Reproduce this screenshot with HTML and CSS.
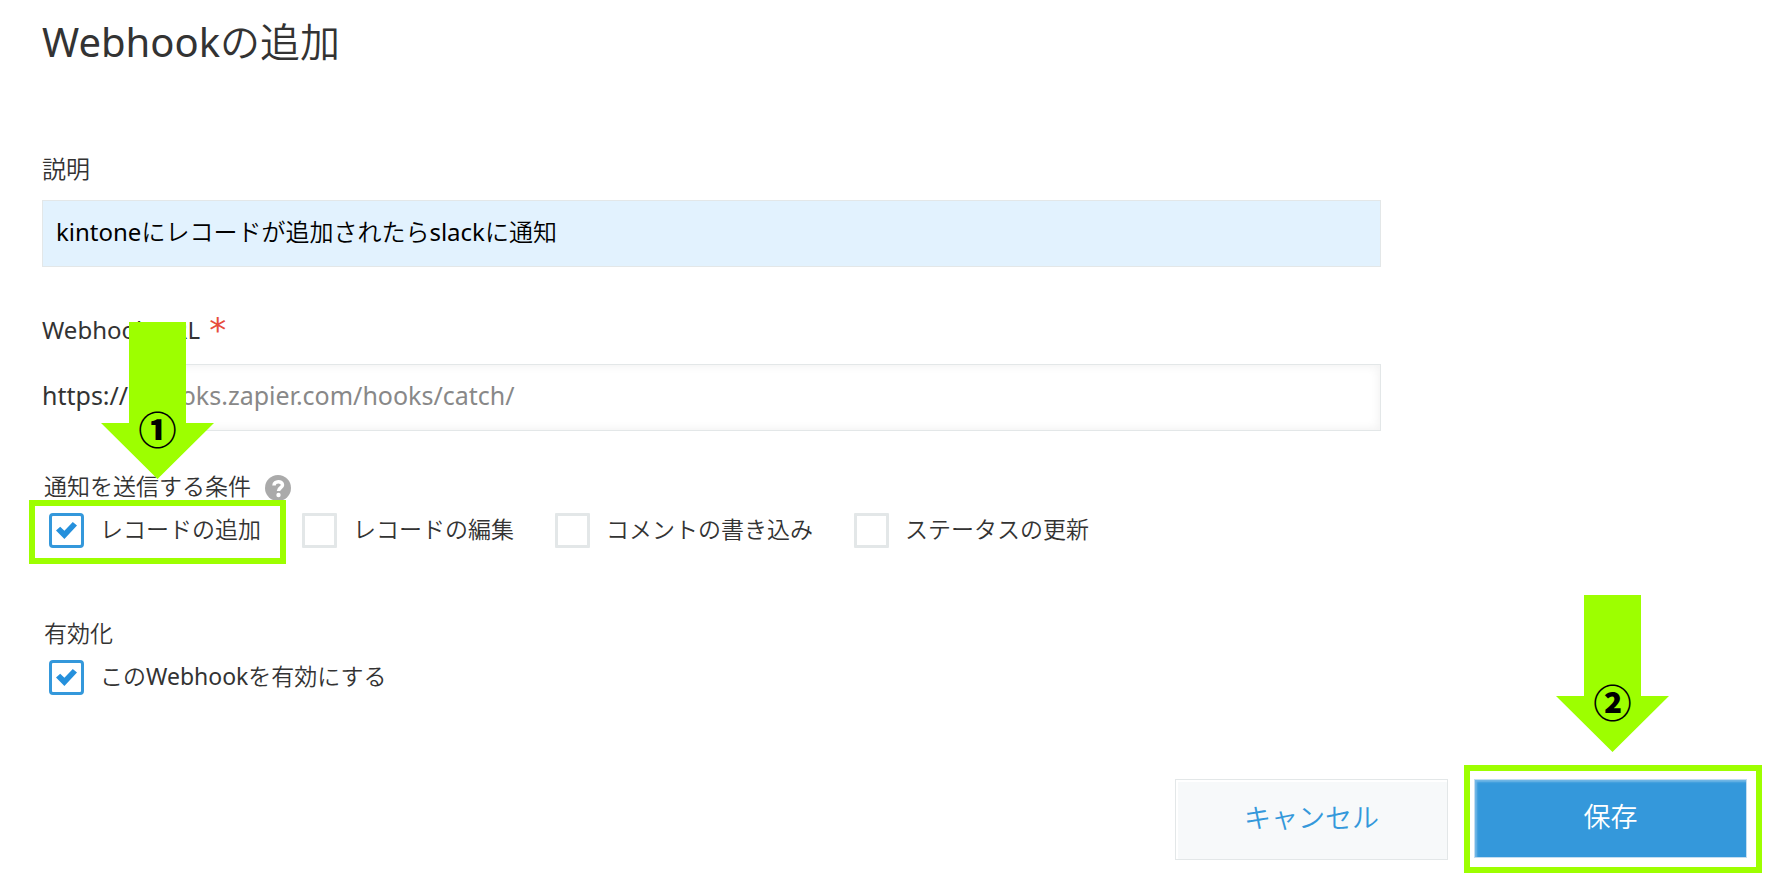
FILE: index.html
```html
<!DOCTYPE html>
<html lang="ja">
<head>
    <meta charset="UTF-8">
    <meta name="viewport" content="width=device-width, initial-scale=1.0">
    <title>Webhookの追加</title>
    <link rel="stylesheet" href="styles.css">
</head>
<body>

<form id="webhookForm" class="page">
    <h1>Webhookの追加</h1>

    <div class="field">
        <label for="description">説明</label>
        <input type="text" id="description" class="text filled" name="description" value="kintoneにレコードが追加されたらslackに通知">
    </div>

    <div class="field">
        <label for="url">Webhook URL <span class="required">*</span></label>
        <div class="url-row">
            <span>https://</span>
            <input type="text" id="url" class="text" name="url" placeholder="hooks.zapier.com/hooks/catch/">
        </div>
    </div>

    <fieldset class="events">
        <legend>通知を送信する条件
            <svg class="help" viewBox="0 0 26 26" aria-label="ヘルプ">
                <circle cx="13" cy="13" r="13" fill="#aaa"/>
                <path d="M9 10.500 C9 5.500 17.500 5.500 17.500 10 C17.500 13 13.500 12.500 13.500 16" fill="none" stroke="#fff" stroke-width="3.500"/>
                <circle cx="13.500" cy="20" r="2.200" fill="#fff"/>
            </svg>
        </legend>
        <div class="checks">
            <div class="callout callout-check">
                <label class="check"><input type="checkbox" name="add" checked><span>レコードの追加</span></label>
                <div class="arrow">
                    <svg viewBox="0 0 113 157"><path d="M28 0H85V101H113L56.500 157L0 101H28Z" fill="#9dff00"/></svg>
                    <span class="number">①</span>
                </div>
            </div>
            <label class="check"><input type="checkbox" name="edit"><span>レコードの編集</span></label>
            <label class="check"><input type="checkbox" name="comment"><span>コメントの書き込み</span></label>
            <label class="check"><input type="checkbox" name="status"><span>ステータスの更新</span></label>
        </div>
    </fieldset>

    <fieldset class="enable">
        <legend>有効化</legend>
        <div class="checks">
            <label class="check"><input type="checkbox" name="enabled" checked><span>このWebhookを有効にする</span></label>
        </div>
    </fieldset>

    <div class="actions">
        <button type="button" class="cancel">キャンセル</button>
        <div class="callout callout-save">
            <button type="submit" class="save">保存</button>
            <div class="arrow">
                <svg viewBox="0 0 113 157"><path d="M28 0H85V101H113L56.500 157L0 101H28Z" fill="#9dff00"/></svg>
                <span class="number">②</span>
            </div>
        </div>
    </div>
</form>

</body>
</html>
```

FILE: styles.css
```css
* { box-sizing: border-box; }
body { margin: 0; background: #fff; color: #333; font: 24px/36px "Noto Sans", "Noto Sans CJK JP DemiLight", "Noto Sans CJK JP Light", "Noto Sans CJK JP", sans-serif; }
input, button { font-family: inherit; }
.page { padding: 12px 22px 12px 42px; }
h1 { margin: 0 0 79px; font-size: 40px; line-height: 60px; font-weight: 400; }

.field { width: 78%; max-width: 1339px; margin-bottom: 45px; }
.field label { display: block; margin-bottom: 13px; }
.field + .field { margin-bottom: 37px; }
.field + .field label { margin-bottom: 16px; }
.required { margin-left: 3px; font-family: "DejaVu Sans", sans-serif; font-size: 34px; line-height: 24px; vertical-align: -3px; color: #e74c3c; }
.text { display: block; width: 100%; height: 67px; padding: 0 13px 6px; border: 1px solid #e3e7e8; font-size: 24px; color: #333; background: #fff; box-shadow: inset 0 0 8px 2px #f3f3f3; }
.text::placeholder { color: #888; opacity: 1; }
.filled { color: #000; background: #e2f2fe; box-shadow: none; }
.url-row { display: flex; gap: 8px; font-size: 25px; }
.url-row span { line-height: 62px; }
.url-row .text { flex: 1; width: auto; font-size: 25px; }

fieldset { margin: 0; padding: 0; border: 0; }
legend { display: flex; align-items: center; gap: 14px; padding: 0 0 0 2px; }
.events legend, .enable legend, .check { font-size: 23px; }
.help { width: 26px; height: 26px; margin-top: 3px; }
.checks { display: flex; gap: 41px; margin: 9px 0 0 7px; }
.check { display: flex; align-items: center; gap: 16px; height: 35px; white-space: nowrap; }
.check span { padding-bottom: 3px; }
.check input { appearance: none; width: 35px; height: 35px; margin: 0; border: 3px solid #e3e7e8; border-radius: 1px; background: #fff; }
.check input:checked { border-color: #3498db; border-radius: 4px; }
.check input:checked::before { content: ""; display: block; width: 21px; height: 17px; margin: 6px 4px; background: #2590dc; clip-path: polygon(0 50%, 20% 28%, 40% 52%, 80% 0, 100% 20%, 40% 100%); }
.events { margin-bottom: 67px; }
.enable { margin-bottom: 70px; }

.actions { display: flex; justify-content: flex-end; align-items: center; gap: 16px; }
.actions button { width: 273px; height: 81px; padding: 0 0 6px; font-size: 27px; cursor: pointer; }
.cancel { border: 1px solid #e3e7e8; background: #f7f9fa; color: #3498db; box-shadow: inset 1px 1px 1px 1px #fff; }
.actions .save { display: block; height: 79px; border: 1px solid #c3ddf0; background: #3498db; color: #fff; box-shadow: inset 2px 2px 2px #73b7e6; }

/* highlighted steps */
.callout { position: relative; }
.callout-check::after { content: ""; position: absolute; inset: -13px -25px -16px -20px; border: 6px solid #9dff00; pointer-events: none; }
.callout-save { padding: 8px 9px 9px 4px; border: 6px solid #9dff00; }
.arrow { position: absolute; left: 50%; bottom: 100%; width: 113px; height: 157px; margin: 0 0 19px -57px; pointer-events: none; }
.callout-check .arrow { margin: 0 0 34px -54px; }
.arrow svg { display: block; width: 100%; height: 100%; }
.number { position: absolute; left: 0; right: 0; bottom: 31px; text-align: center; font: 900 38px/40px "Noto Sans CJK JP", sans-serif; color: #000; }
```
